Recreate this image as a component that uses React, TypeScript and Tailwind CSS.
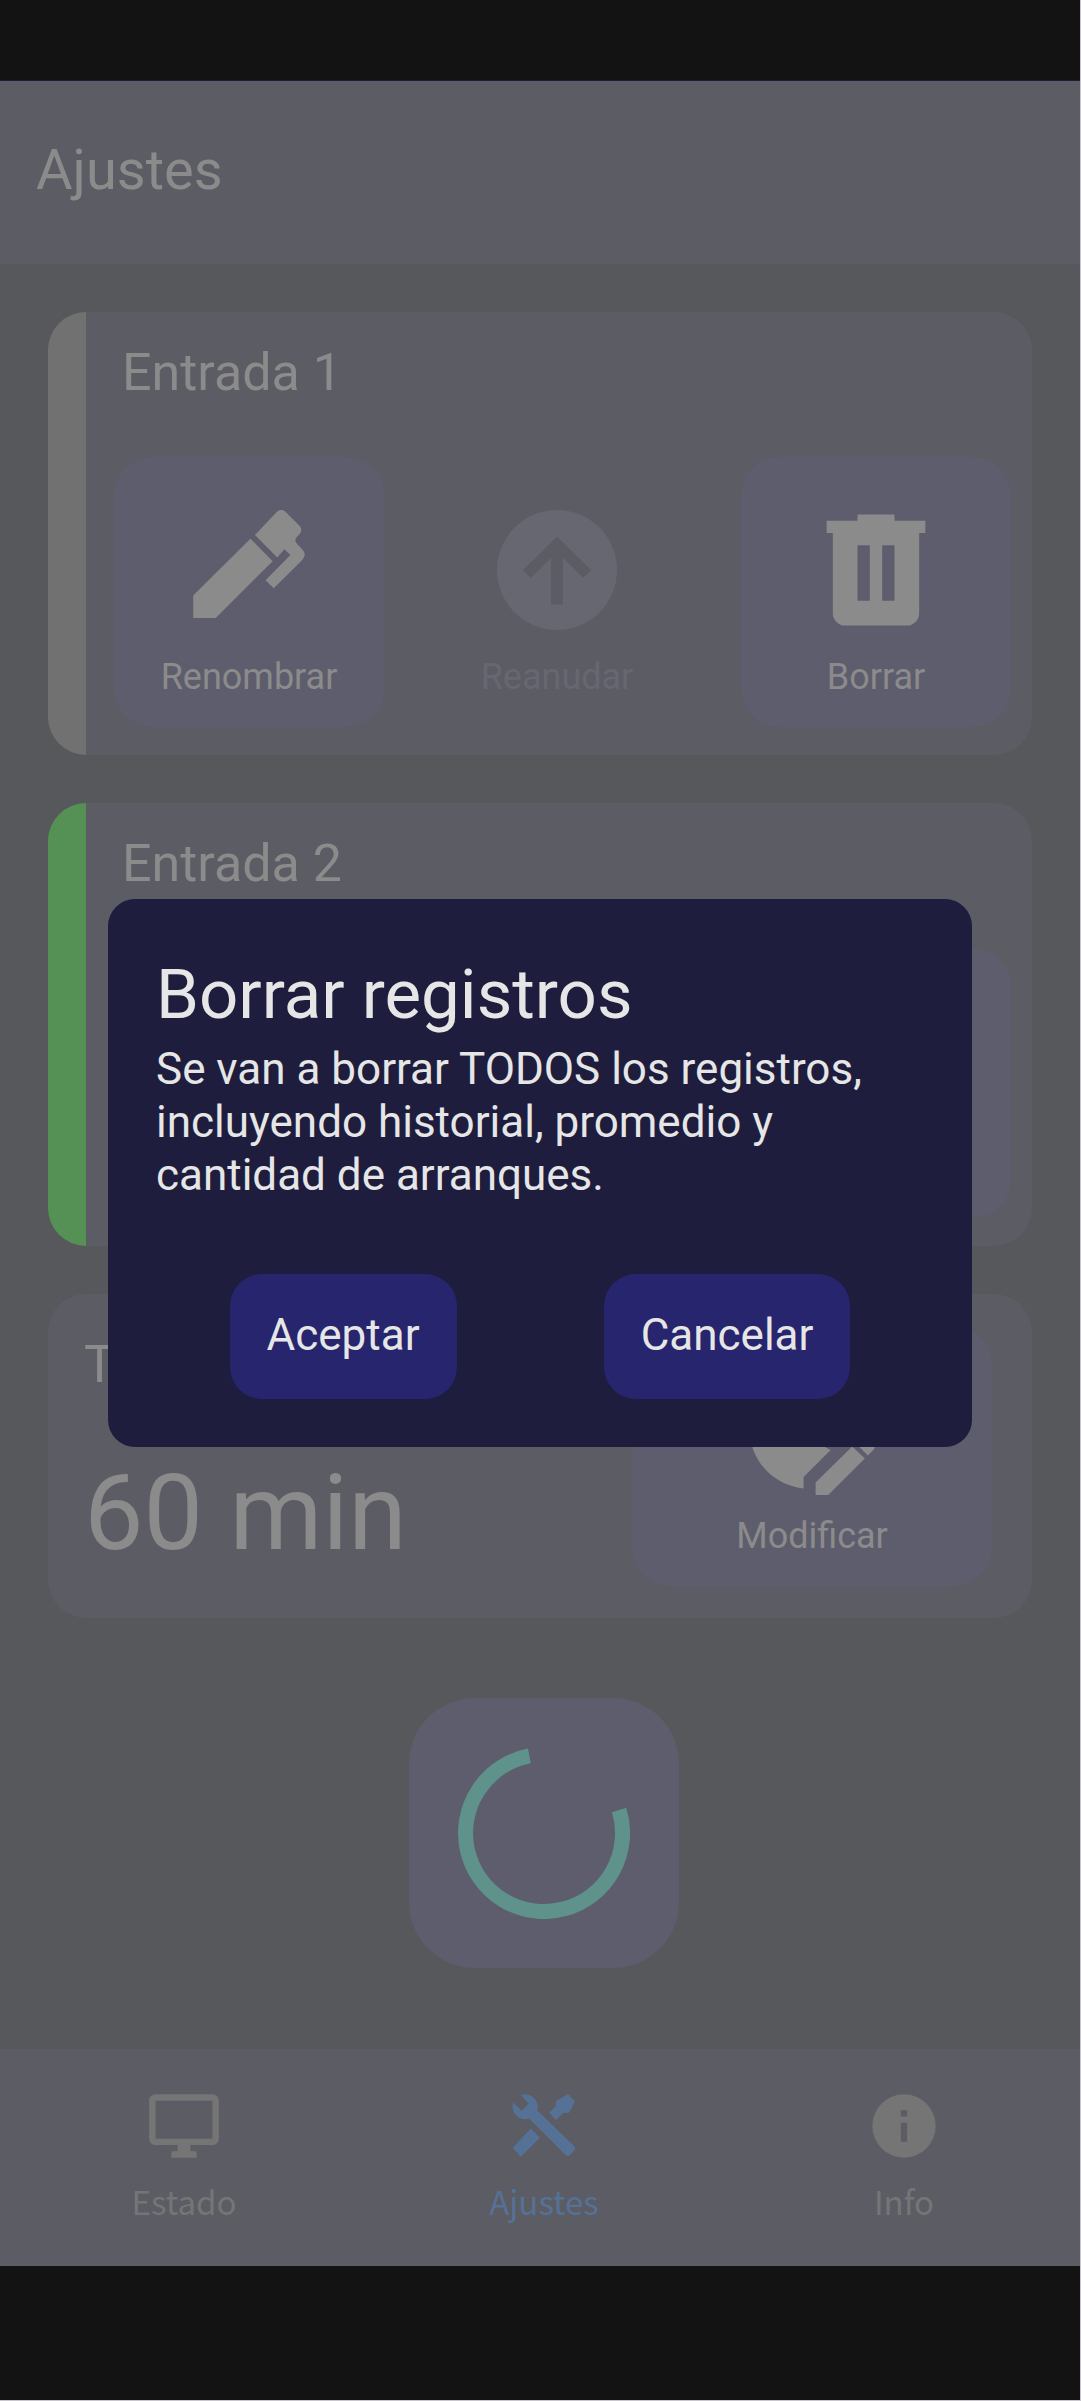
import React from "react";

type IconProps = { d: string; className: string; viewBox?: string };

function Icon({ d, className, viewBox = "0 0 24 24" }: IconProps) {
  return (
    <svg viewBox={viewBox} className={className} fill="currentColor" aria-hidden="true">
      <path d={d} fillRule="evenodd" />
    </svg>
  );
}

const PEN =
  "M20.71,7.04C20.37,7.38 20.04,7.71 20.03,8.04C20,8.36 20.34,8.69 20.66,9C21.14,9.5 21.61,9.95 21.59,10.44C21.57,10.93 21.06,11.44 20.55,11.94L16.42,16.05L15.06,14.7L19.2,10.5L18.2,9.55L17,10.9L13.3,7.17L16.96,3.29C17.35,2.9 18,2.9 18.37,3.29L20.71,5.63C21.1,6 21.1,6.65 20.71,7.04M3,17.25L12.54,7.78L16.25,11.53L6.75,21H3V17.25Z";
const ARROW_UP =
  "M13,17.75V10L16.35,13.35L17.7,12.05L12,6.4L6.3,12.05L7.65,13.35L11,10V17.75H13M12,2A10,10 0 0,1 22,12A10,10 0 0,1 12,22A10,10 0 0,1 2,12A10,10 0 0,1 12,2Z";
const TRASH =
  "M9,3V4H4V6H5V19A2,2 0 0,0 7,21H17A2,2 0 0,0 19,19V6H20V4H15V3H9M9,8H11V17H9V8M13,8H15V17H13V8Z";
const CLOCK_EDIT =
  "M21,13.1C20.9,13.1 20.7,13.2 20.6,13.3L19.6,14.3L21.7,16.4L22.7,15.4C22.9,15.2 22.9,14.8 22.7,14.6L21.4,13.3C21.3,13.2 21.2,13.1 21,13.1M19.1,14.9L13,20.9V23H15.1L21.2,16.9L19.1,14.9M12.5,7V12.2L16.5,14.5L15.5,15.5L11,13V7H12.5M11,21.9C5.9,21.4 2,17.2 2,12C2,6.5 6.5,2 12,2C17.3,2 21.6,6.1 22,11.3C21.7,11.2 21.4,11.1 21,11.1C20.2,11.1 19.6,11.4 19.2,11.8L11,20V21.9Z";
const MONITOR =
  "M21,16H3V4H21M21,2H3C1.89,2 1,2.89 1,4V16A2,2 0 0,0 3,18H10V20H8V22H16V20H14V18H21A2,2 0 0,0 23,16V4C23,2.89 22.1,2 21,2Z";
const TOOLS =
  "M21.4 19.9L20.4 21A1.2 1.2 0 0 1 18.7 21.1L7.3 9.65A3.81 3.81 0 0 1 6 9.9A4 4 0 0 1 2.3 4.6L4.9 7.2L7.2 4.9L4.7 2.2A4 4 0 0 1 10 6A3.81 3.81 0 0 1 9.85 7L21.4 18.2A1.2 1.2 0 0 1 21.4 19.9M2.1 18.9L4.7 21.7L10.7 15.7L7.9 12.8ZM19.6 1.9L15.8 4.1V5.7L13.6 7.8L15.8 10.1L18.1 7.8H19.9L21.8 4.3Z";
const INFO =
  "M13,9H11V7H13M13,17H11V11H13M12,2A10,10 0 0,0 2,12A10,10 0 0,0 12,22A10,10 0 0,0 22,12A10,10 0 0,0 12,2Z";

function ActionButton({
  label,
  d,
  viewBox,
  iconClass = "size-36",
  className = "h-[270px] w-[270px] bg-[#5e5d6d] text-[#8b8b8b]",
  disabled = false,
}: {
  label: string;
  d: string;
  viewBox?: string;
  iconClass?: string;
  className?: string;
  disabled?: boolean;
}) {
  return (
    <button
      type="button"
      disabled={disabled}
      className={`flex flex-col items-center justify-end rounded-[38px] pb-[27px] ${className}`}
    >
      <span className="flex h-36 items-center justify-center">
        <Icon d={d} viewBox={viewBox} className={`shrink-0 ${iconClass}`} />
      </span>
      <span className="mt-3 text-[36px] leading-[46px]">{label}</span>
    </button>
  );
}

function EntryCard({ name, barClass }: { name: string; barClass: string }) {
  return (
    <section className="flex overflow-hidden rounded-[38px] bg-[#5c5c65]">
      <div className={`w-[38px] shrink-0 ${barClass}`} />
      <div className="flex-1 pt-[30px] pr-[21px] pb-7 pl-7">
        <h2 className="pl-2 text-[52px] leading-[61px]">{name}</h2>
        <div className="mt-[54px] flex">
          <ActionButton label="Renombrar" d={PEN} viewBox="0.3 1 24 24" />
          <ActionButton
            label="Reanudar"
            d={ARROW_UP}
            disabled
            className="ml-[38px] h-[270px] w-[270px] text-[#676771]"
          />
          <ActionButton
            label="Borrar"
            d={TRASH}
            iconClass="size-[148px]"
            className="ml-auto h-[270px] w-[270px] bg-[#5e5d6d] text-[#8b8b8b]"
          />
        </div>
      </div>
    </section>
  );
}

const NAV = [
  { label: "Estado", d: MONITOR, className: "text-[#757575]" },
  { label: "Ajustes", d: TOOLS, className: "text-[#557296]" },
  { label: "Info", d: INFO, className: "text-[#757575]" },
];

export default function App() {
  return (
    <div className="relative flex min-h-screen flex-col border-r border-b border-[#c9c6d0] bg-[#57585c] font-[Roboto,sans-serif] text-[#8b8b8b]">
      <div className="h-20 shrink-0 bg-[#131313]" />
      <header className="border-t border-[#1e1d3e] bg-[#5c5c65] px-9 pt-14 pb-[61px]">
        <h1 className="text-[56px] leading-[66px]">Ajustes</h1>
      </header>

      <main className="flex flex-1 flex-col gap-12 px-12 pt-12">
        <EntryCard name="Entrada 1" barClass="bg-[#717171]" />
        <EntryCard name="Entrada 2" barClass="bg-[#559155]" />
        <section className="flex items-end justify-between rounded-[38px] bg-[#5c5c65] pt-8 pr-10 pb-8 pl-9">
          <div className="self-start pt-2">
            <h2 className="text-[52px] leading-[61px]">Tiempo</h2>
            <p className="mt-14 text-[106px] leading-[124px]">60 min</p>
          </div>
          <ActionButton
            label="Modificar"
            d={CLOCK_EDIT}
            viewBox="0.4 0 24 24"
            className="h-[260px] w-[360px] bg-[#5e5d6d] text-[#8b8b8b]"
          />
        </section>
        <div className="mt-8 flex justify-center pl-2">
          <button
            type="button"
            aria-label="Cargando"
            className="flex size-[270px] items-center justify-center rounded-[66px] bg-[#5e5d6d] text-[#5e928b]"
          >
            <svg viewBox="0 0 172 172" className="size-[172px]" fill="none" aria-hidden="true">
              <path
                d="M161.1 63 A78.5 78.5 0 1 1 71.4 8.9"
                stroke="currentColor"
                strokeWidth="15"
              />
            </svg>
          </button>
        </div>
      </main>

      <nav className="overflow-hidden bg-[#5c5c65]">
        <div className="-mr-1 ml-1 grid grid-cols-3 pt-[39px] pb-8">
          {NAV.map((item) => (
            <a
              key={item.label}
              href={`#${item.label.toLowerCase()}`}
              className={`flex flex-col items-center ${item.className}`}
            >
              <Icon d={item.d} className="size-[76px]" />
              <span className="mt-1 font-['Noto_Sans_CJK_JP',sans-serif] text-[33px] leading-[66px]">
                {item.label}
              </span>
            </a>
          ))}
        </div>
      </nav>
      <div className="h-[134px] shrink-0 bg-[#131313]" />

      <div className="absolute inset-0 flex items-center justify-center pb-[54px]">
        <div
          role="dialog"
          aria-modal="true"
          aria-labelledby="dialog-title"
          className="w-4/5 rounded-[27px] bg-[#1e1d3e] p-12 text-[#e6e6e6]"
        >
          <h2 id="dialog-title" className="text-[69px] leading-[96px]">
            Borrar registros
          </h2>
          <p className="text-[44px] leading-[53px]">
            Se van a borrar TODOS los registros, incluyendo historial, promedio y cantidad de
            arranques.
          </p>
          <div className="mt-[72px] flex justify-around text-[44px] leading-[53px]">
            <button type="button" className="rounded-[32px] bg-[#26256d] px-[37px] pt-[35px] pb-[37px]">
              Aceptar
            </button>
            <button type="button" className="rounded-[32px] bg-[#26256d] px-[37px] pt-[35px] pb-[37px]">
              Cancelar
            </button>
          </div>
        </div>
      </div>
    </div>
  );
}
